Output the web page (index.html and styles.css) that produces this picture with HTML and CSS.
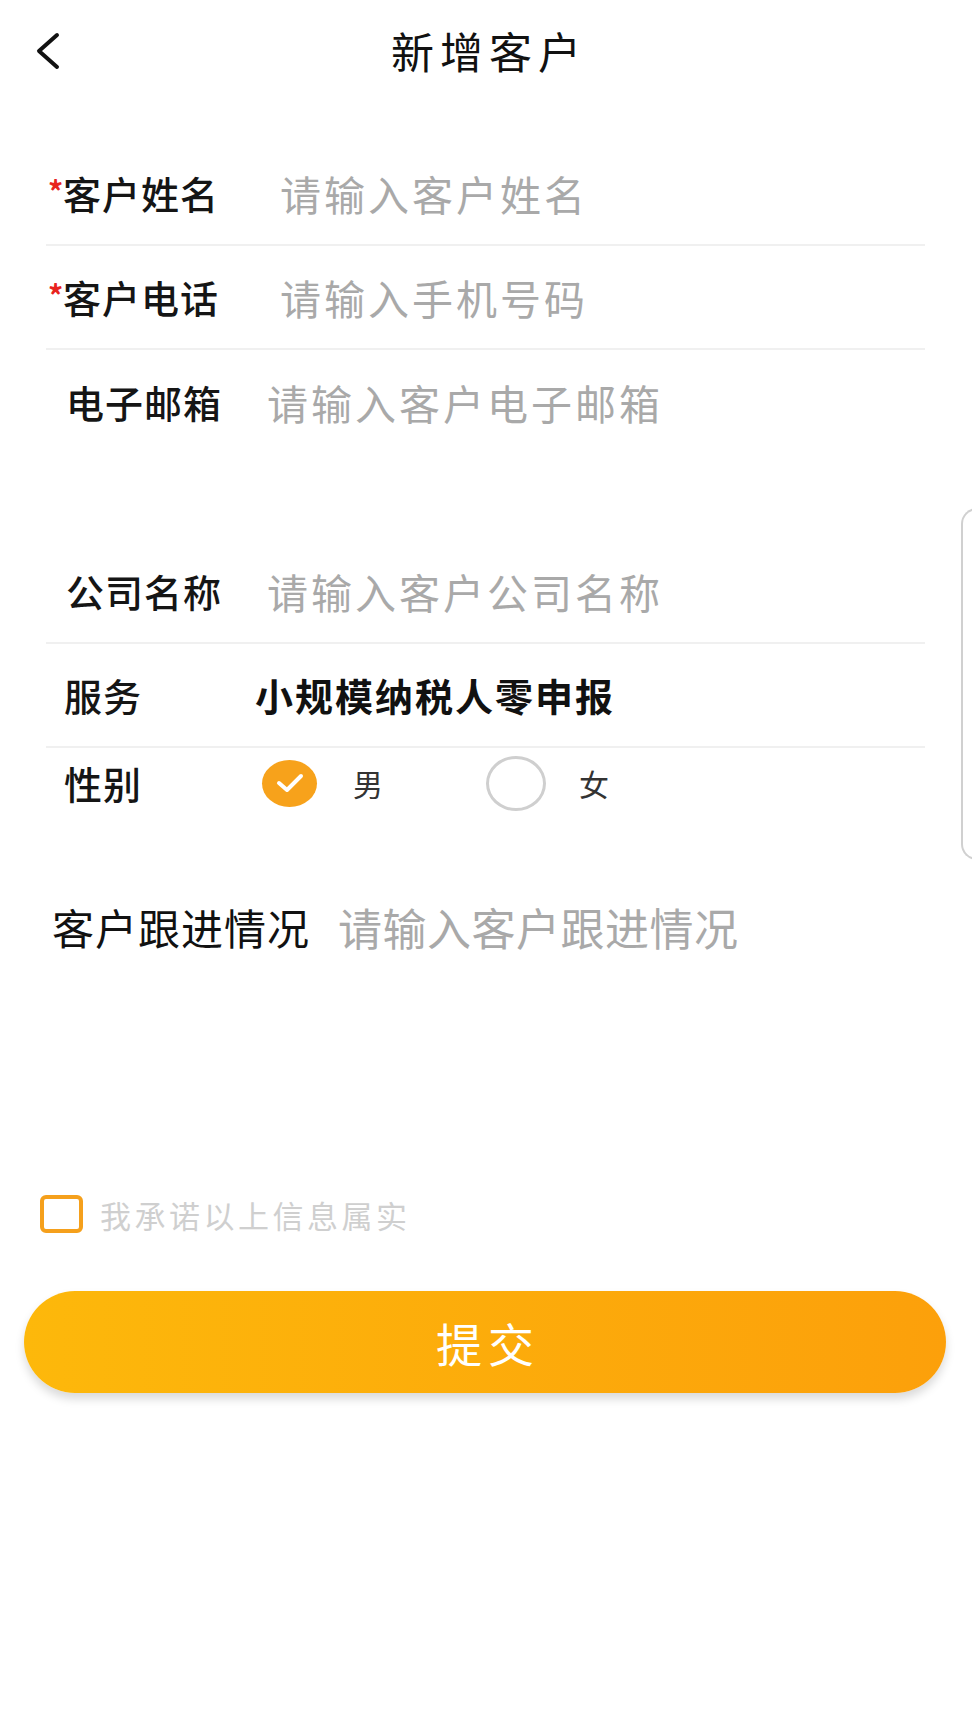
FILE: index.html
```html
<!DOCTYPE html>
<html lang="zh-CN">
<head>
    <meta charset="UTF-8">
    <meta name="viewport" content="width=device-width, initial-scale=1.0">
    <title>新增客户</title>
    <link rel="stylesheet" href="styles.css">
</head>
<body>
    <header class="nav">
        <a class="nav-back" href="#">
            <svg width="30" height="40" viewBox="0 0 30 40">
                <polyline points="24,4 6,20 24,36" fill="none" stroke="#111" stroke-width="4" stroke-linecap="round" stroke-linejoin="round"/>
            </svg>
        </a>
        <h1 class="nav-title">新增客户</h1>
        <span></span>
    </header>

    <form class="form">
        <!-- 基本信息 -->
        <div class="row row-req">
            <label class="label"><span class="star">*</span>客户姓名</label>
            <input class="field" type="text" placeholder="请输入客户姓名">
        </div>
        <div class="row row-req">
            <label class="label"><span class="star">*</span>客户电话</label>
            <input class="field" type="tel" placeholder="请输入手机号码">
        </div>
        <div class="row row-plain row-last">
            <label class="label">电子邮箱</label>
            <input class="field" type="email" placeholder="请输入客户电子邮箱">
        </div>

        <div class="row row-plain">
            <label class="label">公司名称</label>
            <input class="field" type="text" placeholder="请输入客户公司名称">
        </div>
        <div class="row row-service">
            <label class="label">服务</label>
            <span class="value">小规模纳税人零申报</span>
        </div>
        <div class="row row-gender row-last">
            <label class="label">性别</label>
            <div class="radios">
                <span class="radio">
                    <span class="radio-dot radio-on">
                        <svg width="30" height="22" viewBox="0 0 30 22">
                            <polyline points="4,11 12,18 26,4" fill="none" stroke="#fff" stroke-width="4" stroke-linecap="round" stroke-linejoin="round"/>
                        </svg>
                    </span>
                    <span class="radio-text">男</span>
                </span>
                <span class="radio">
                    <span class="radio-dot radio-off"></span>
                    <span class="radio-text">女</span>
                </span>
            </div>
        </div>

        <!-- 跟进情况 -->
        <div class="follow">
            <label class="follow-label">客户跟进情况</label>
            <textarea class="follow-field" placeholder="请输入客户跟进情况"></textarea>
        </div>
    </form>

    <div class="agree">
        <span class="agree-box"></span>
        <span class="agree-text">我承诺以上信息属实</span>
    </div>

    <button class="submit" type="button">提交</button>

    <div class="side-tab"></div>
</body>
</html>
```

FILE: styles.css
```css
/* 基础 */
body {
    margin: 0;
    background: #ffffff;
    font-family: "Noto Sans CJK SC", "Noto Sans", sans-serif;
    color: #111111;
    position: relative;
    min-height: 1728px;
}

/* 顶部导航 */
.nav {
    height: 100px;
    display: grid;
    grid-template-columns: 1fr auto 1fr;
    align-items: center;
}

.nav-back {
    display: flex;
    align-items: center;
    padding-left: 33px;
    padding-top: 2px;
}

.nav-title {
    margin: 0;
    font-size: 43px;
    font-weight: 400;
    letter-spacing: 6px;
    line-height: 1;
    padding-left: 6px;
    color: #111111;
}

/* 表单 */
.form {
    margin: 42px 47px 0 46px;
}

.row {
    height: 102px;
    display: flex;
    align-items: center;
    border-bottom: 2px solid #f0f0f0;
}

.row-last {
    border-bottom: none;
    height: 104px;
}

.row-plain.row-last {
    margin-bottom: 86px;
}

.label {
    flex: 0 0 221px;
    box-sizing: border-box;
    padding-left: 20px;
    font-size: 38px;
    font-weight: 500;
    letter-spacing: 1px;
    line-height: 1;
    color: #151515;
}

.row-req .label {
    flex-basis: 234px;
    padding-left: 2px;
}

.star {
    display: inline-block;
    width: 15px;
    color: #e8231e;
    font-size: 30px;
    font-weight: 700;
    vertical-align: 6px;
}

.row-service .label {
    flex-basis: 209px;
    padding-left: 18px;
}

.row-gender {
    height: 70px;
}

.row-gender .label {
    flex-basis: 216px;
    padding-left: 18px;
}

.field {
    flex: 1;
    min-width: 0;
    border: none;
    outline: none;
    padding: 0;
    background: transparent;
    font-family: inherit;
    font-size: 41px;
    letter-spacing: 3px;
    color: #111111;
}

.field::placeholder {
    color: #a9a9a9;
}

.value {
    font-size: 38px;
    font-weight: 700;
    letter-spacing: 2px;
    line-height: 1;
    color: #111111;
}

/* 性别 */
.radios {
    display: flex;
    align-items: center;
    gap: 103px;
}

.radio {
    display: flex;
    align-items: center;
    gap: 36px;
}

.radio-dot {
    box-sizing: border-box;
    display: flex;
    align-items: center;
    justify-content: center;
    border-radius: 50%;
}

.radio-on {
    width: 55px;
    height: 47px;
    background: #f7a21b;
}

.radio-off {
    width: 60px;
    height: 55px;
    border: 3px solid #cfcfcf;
}

.radio-text {
    font-size: 30px;
    line-height: 1;
    color: #333333;
}

.radio-off + .radio-text {
    margin-left: -3px;
}

/* 跟进情况 */
.follow {
    display: flex;
    align-items: flex-start;
    margin-top: 79px;
    padding-left: 6px;
    height: 290px;
}

.follow-label {
    flex: 0 0 286px;
    font-size: 42px;
    letter-spacing: 1px;
    line-height: 60px;
    color: #111111;
}

.follow-field {
    flex: 1;
    height: 250px;
    border: none;
    outline: none;
    resize: none;
    padding: 0;
    font-family: inherit;
    font-size: 44px;
    letter-spacing: 0.5px;
    line-height: 60px;
}

.follow-field::placeholder {
    color: #a9a9a9;
}

/* 承诺 */
.agree {
    display: flex;
    align-items: center;
    gap: 17px;
    margin: 2px 0 0 40px;
    height: 50px;
}

.agree-box {
    box-sizing: border-box;
    width: 43px;
    height: 38px;
    border: 4px solid #f5a01c;
    border-radius: 6px;
}

.agree-text {
    font-size: 31px;
    letter-spacing: 3.5px;
    line-height: 1;
    color: #cfcfcf;
}

/* 提交按钮 */
.submit {
    display: block;
    width: 922px;
    height: 102px;
    margin: 52px 0 0 24px;
    border: none;
    border-radius: 51px;
    background: linear-gradient(90deg, #fdb80b, #fca00b);
    box-shadow: 0px 6px 10px rgba(0, 0, 0, 0.15);
    color: #ffffff;
    font-family: inherit;
    font-size: 46px;
    letter-spacing: 6px;
    padding: 0 0 0 6px;
    cursor: pointer;
}

/* 右侧悬浮把手 */
.side-tab {
    position: absolute;
    top: 508px;
    left: 961px;
    width: 40px;
    height: 352px;
    box-sizing: border-box;
    border: 2px solid #d0d0d0;
    border-right: none;
    border-radius: 16px 0 0 16px;
}
```
